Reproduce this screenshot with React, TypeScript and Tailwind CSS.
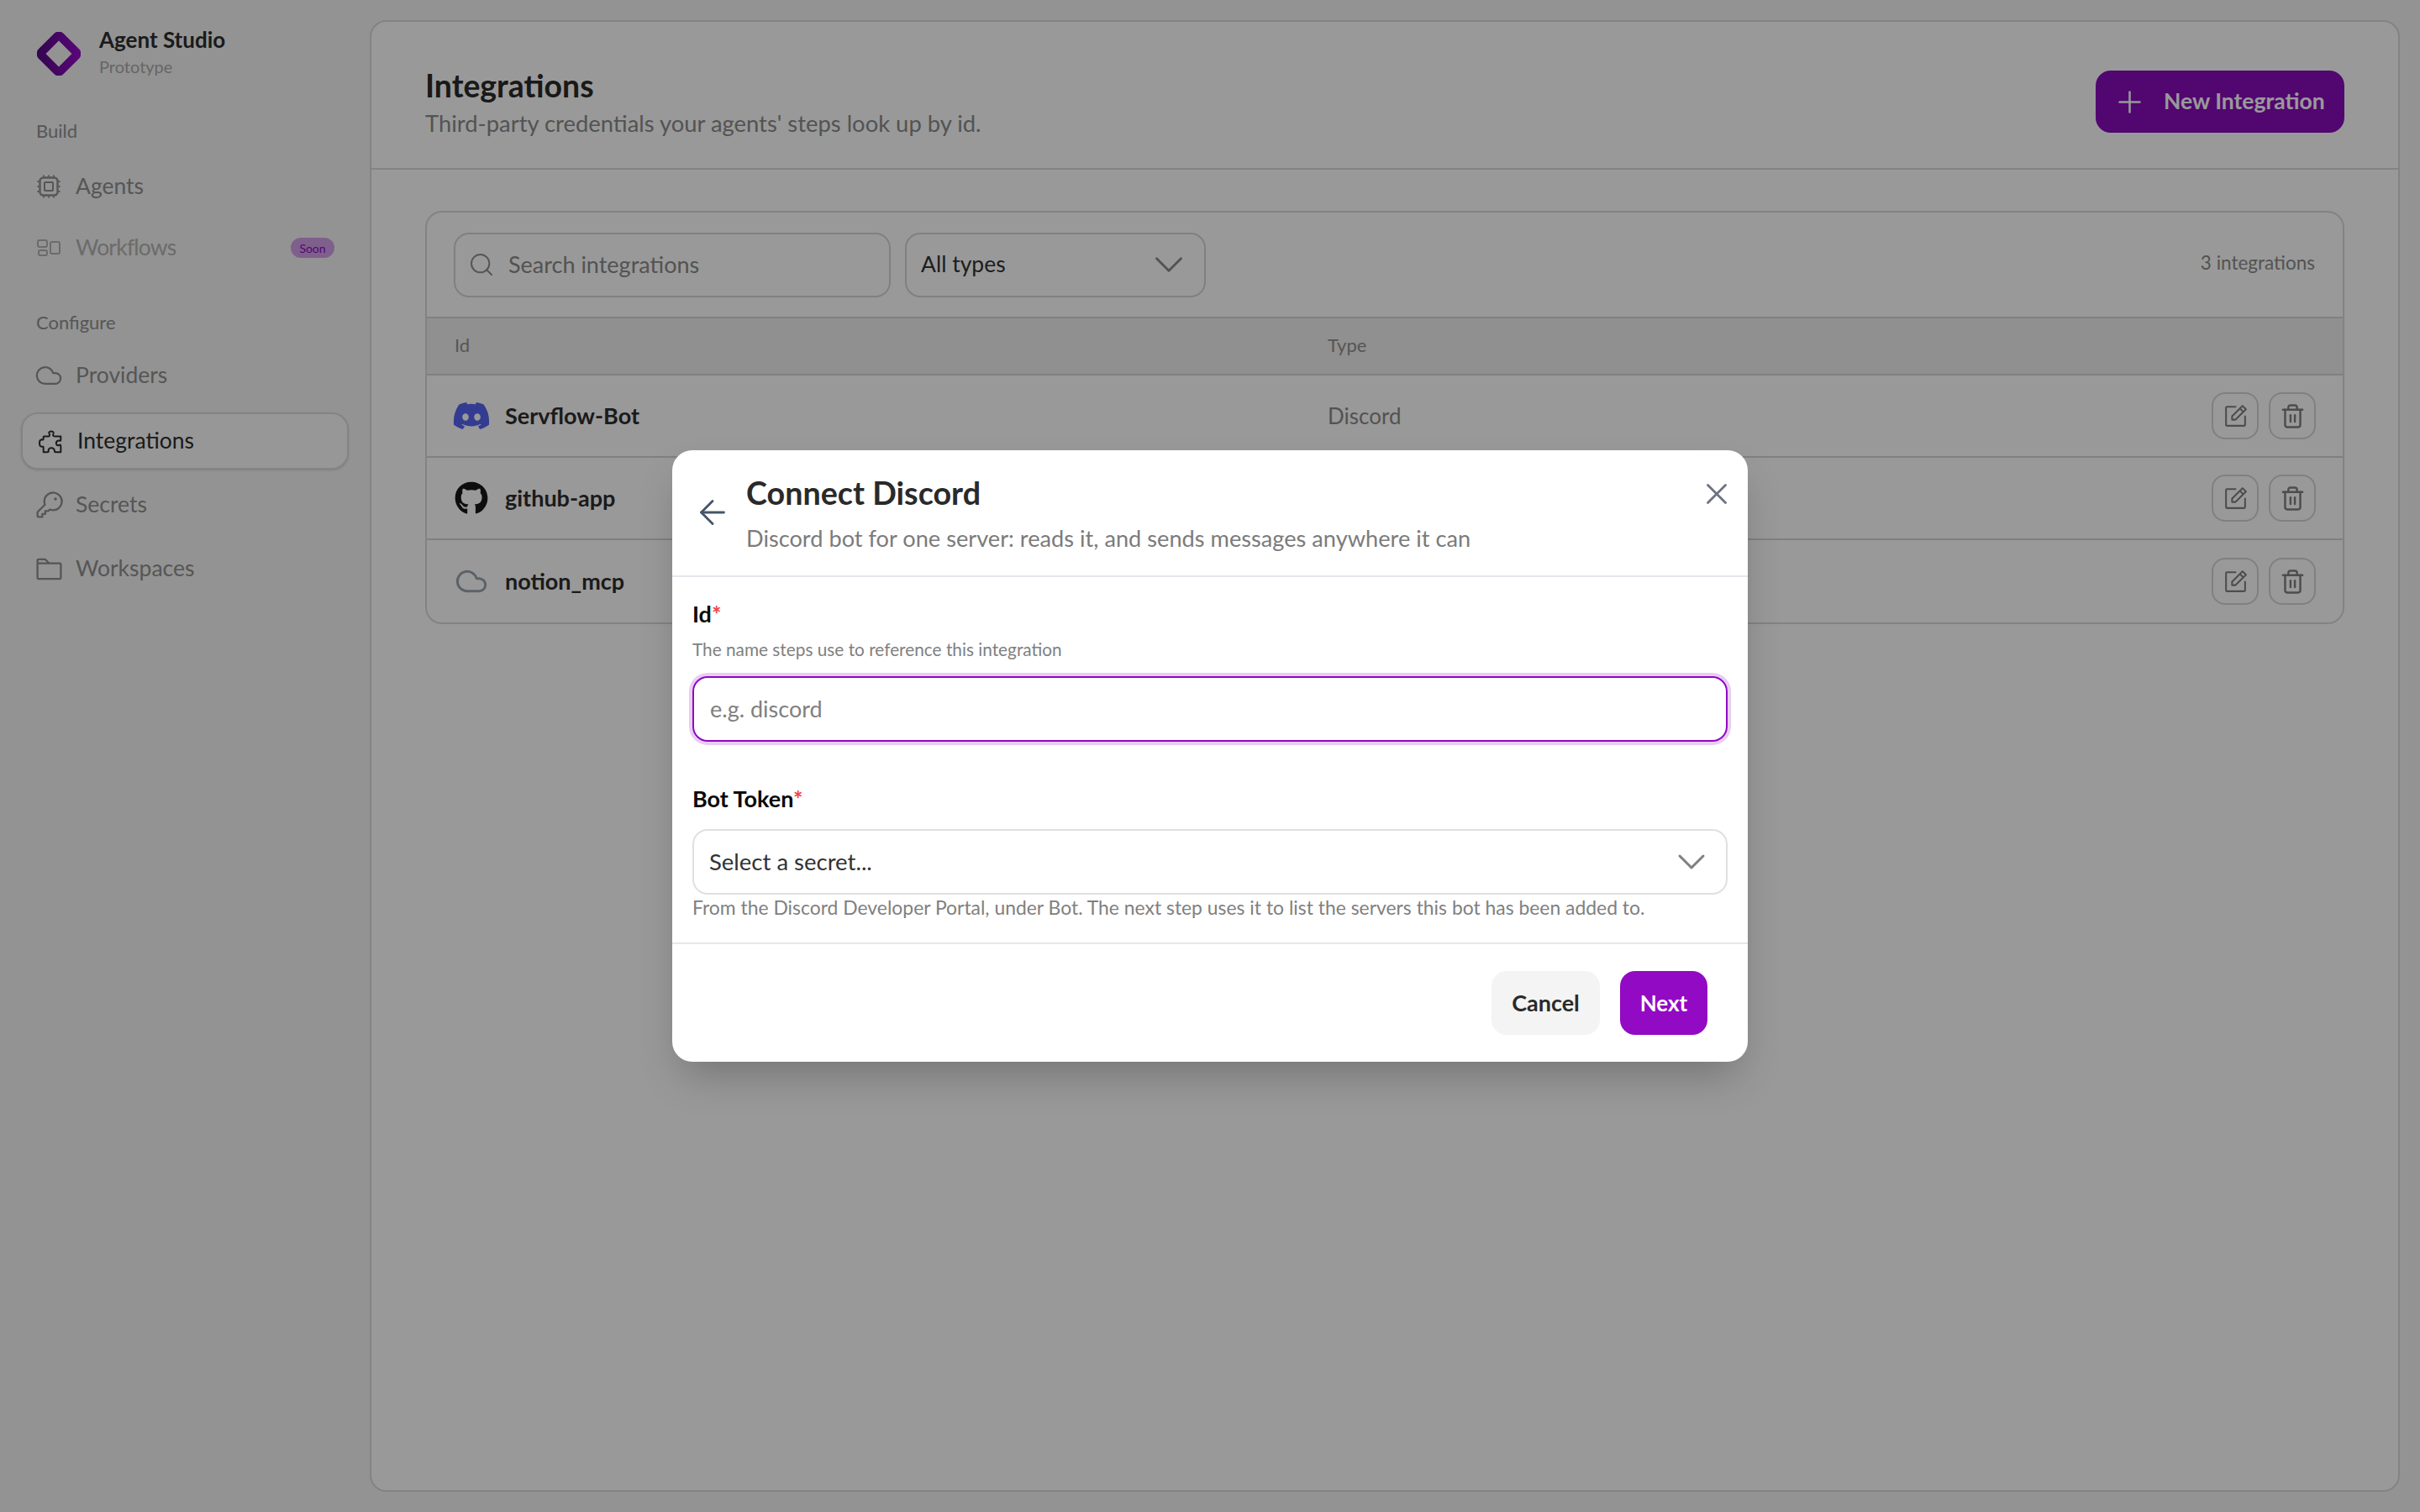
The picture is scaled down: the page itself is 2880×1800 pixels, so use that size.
import { ArrowLeft, ChevronDown, Cloud, Plus, Search, Trash2, X } from 'lucide-react'
import { FaDiscord, FaGithub } from 'react-icons/fa'
import { PiFolder, PiKey, PiNotePencil } from 'react-icons/pi'
import type { ReactNode } from 'react'

function Logo() {
  return (
    <svg width="52" height="52" viewBox="0 0 52 52" className="shrink-0">
      <defs>
        <linearGradient id="logo-grad" x1="0" y1="1" x2="1" y2="0">
          <stop offset="0" stopColor="#5a0a88" />
          <stop offset="1" stopColor="#930ac8" />
        </linearGradient>
      </defs>
      <rect
        x="10"
        y="10"
        width="32"
        height="32"
        rx="3"
        fill="none"
        stroke="url(#logo-grad)"
        strokeWidth="10"
        transform="rotate(45 26 26)"
      />
    </svg>
  )
}

function CpuIcon() {
  return (
    <svg width="28" height="28" viewBox="0 0 28 28" fill="none" stroke="currentColor" className="shrink-0">
      <rect x="3.5" y="3.5" width="21" height="21" rx="4" strokeWidth="2.4" />
      <rect x="9" y="9" width="10" height="10" rx="1" strokeWidth="2" />
      <path d="M8 0.5v2M14 0.5v2M20 0.5v2M8 25.5v2M14 25.5v2M20 25.5v2M0.5 8h2M0.5 14h2M0.5 20h2M25.5 8h2M25.5 14h2M25.5 20h2" strokeWidth="1.8" />
    </svg>
  )
}

function LayoutIcon() {
  return (
    <svg width="28" height="20" viewBox="0 0 28 20" fill="none" stroke="currentColor" strokeWidth="2" className="shrink-0">
      <rect x="1" y="1" width="11" height="8" rx="2" />
      <rect x="2" y="13" width="10" height="6" rx="2" />
      <rect x="16" y="3" width="11" height="14" rx="2" />
    </svg>
  )
}

function PuzzleIcon() {
  return (
    <svg width="30" height="31" viewBox="24 22 90 92" fill="none" stroke="currentColor" strokeWidth="6" strokeLinejoin="round" className="shrink-0">
      <path d="M46 50 H62 C68 50 66 42 64 38 C62 30 82 30 80 38 C78 44 76 50 84 50 H106 V62 C106 70 98 62 94 66 C86 72 90 84 98 82 C102 80 106 78 106 86 V106 H86 C82 106 86 98 80 94 C74 88 62 92 62 100 C62 104 64 106 58 106 H44 V90 C44 84 38 88 36 86 C28 84 28 64 36 62 C40 60 44 66 44 58 V52 Z" />
    </svg>
  )
}

function NavItem({ icon, label, className, badge }: { icon: ReactNode; label: string; className: string; badge?: string }) {
  return (
    <div className={`mx-[25px] flex h-[68px] w-[390px] items-center gap-[18px] px-[19px] text-[26.5px] ${className}`}>
      <span className="flex w-[28px] shrink-0 items-center justify-center">{icon}</span>
      <span>{label}</span>
      {badge && (
        <span className="mr-[-2px] ml-auto flex h-[24px] w-[52px] items-center justify-center rounded-full bg-[#d49ee9] text-[14px] tracking-normal text-[#8a0bc4]">
          {badge}
        </span>
      )}
    </div>
  )
}

function SectionLabel({ children, className }: { children: string; className: string }) {
  return <div className={`pl-[43px] text-[22px] leading-[30px] text-[#8f8f8f] ${className}`}>{children}</div>
}

function Sidebar() {
  return (
    <aside className="flex w-[440px] shrink-0 flex-col">
      <div className="flex items-center gap-[22px] pt-[32px] pl-[44px]">
        <Logo />
        <div>
          <div className="text-[26px] leading-[30px] font-bold text-[#2e2e2e]">Agent Studio</div>
          <div className="text-[20px] leading-[34px] text-[#ababab]">Prototype</div>
        </div>
      </div>
      <SectionLabel className="mt-[45px]">Build</SectionLabel>
      <NavItem className="mt-[17px] text-[#8f8f8f]" icon={<CpuIcon />} label="Agents" />
      <NavItem className="mt-[5px] tracking-[-0.8px] text-[#b3b3b3]" icon={<LayoutIcon />} label="Workflows" badge="Soon" />
      <SectionLabel className="mt-[40px]">Configure</SectionLabel>
      <NavItem className="mt-[14px] text-[#8f8f8f]" icon={<Cloud className="size-[34px] shrink-0" strokeWidth={1.6} />} label="Providers" />
      <NavItem
        className="mt-[10px] rounded-[20px] border-2 border-[#dcdcdc] bg-[#fcfcfc] text-[#2e2e2e] shadow-sm"
        icon={<PuzzleIcon />}
        label="Integrations"
      />
      <NavItem className="mt-[8px] text-[#8f8f8f]" icon={<PiKey className="size-[37px] shrink-0" />} label="Secrets" />
      <NavItem className="mt-[8px] text-[#8f8f8f]" icon={<PiFolder className="size-[37px] shrink-0" />} label="Workspaces" />
    </aside>
  )
}

const rows = [
  { id: 'Servflow-Bot', type: 'Discord', icon: <FaDiscord className="size-[46px] shrink-0 text-[#5865f2]" /> },
  { id: 'github-app', type: 'GitHub', icon: <FaGithub className="size-[40px] shrink-0 text-[#181717]" /> },
  { id: 'notion_mcp', type: 'MCP', icon: <Cloud className="size-[40px] shrink-0 text-[#9ca3af]" strokeWidth={1.8} /> },
]

function IntegrationsPage() {
  return (
    <main className="my-[24px] mr-[24px] flex flex-1 flex-col rounded-[20px] border-2 border-[#dadada] bg-white">
      <header className="flex h-[176px] shrink-0 items-start justify-between border-b-2 border-[#dadada] px-[64px] pt-[52px]">
        <div>
          <h1 className="text-[37.4px] leading-[48px] font-bold text-[#2a2a2a]">Integrations</h1>
          <p className="mt-[3px] text-[27.4px] leading-[36px] text-[#8a8a8a]">
            Third-party credentials your agents' steps look up by id.
          </p>
        </div>
        <button className="mt-[6px] flex h-[74px] w-[296px] items-center gap-[20px] rounded-[18px] bg-[#880abb] pl-[20px] text-[26.5px] font-bold text-white">
          <Plus className="size-[41px]" strokeWidth={1.5} />
          New Integration
        </button>
      </header>
      <div className="px-[64px] pt-[49px]">
        <div className="rounded-[20px] border-2 border-[#dadada]">
          <div className="flex h-[126px] items-center border-b-2 border-[#d6d6d6] pr-[33px] pl-[32px]">
            <div className="flex h-[77px] w-[520px] items-center gap-[16px] rounded-[18px] border-2 border-[#d6d6d6] pl-[15px]">
              <Search className="size-[32px] text-[#8f8f8f]" strokeWidth={1.5} />
              <span className="text-[27px] text-[#8a8a8a]">Search integrations</span>
            </div>
            <div className="ml-[17px] flex h-[77px] w-[358px] items-center justify-between rounded-[18px] border-2 border-[#d6d6d6] pr-[13px] pl-[17px]">
              <span className="text-[26.5px] text-[#333333]">All types</span>
              <ChevronDown className="size-[58px] text-[#8a8a8a]" strokeWidth={1.2} />
            </div>
            <span className="mb-[4px] ml-auto text-[22.5px] text-[#8a8a8a]">3 integrations</span>
          </div>
          <div className="flex h-[68px] items-center border-b-2 border-[#d6d6d6] bg-[#f1f1f1] px-[33px] pb-[3px] text-[22px] text-[#8f8f8f]">
            <span className="w-[1039px]">Id</span>
            <span>Type</span>
          </div>
          {rows.map((row, i) => (
            <div
              key={row.id}
              className={`flex h-[98px] items-center pr-[32px] pl-[33px] ${i < rows.length - 1 ? 'border-b-2 border-[#d6d6d6]' : ''}`}
            >
              <div className="flex w-[1039px] items-center gap-[20px]">
                <span className="flex w-[40px] items-center justify-center">{row.icon}</span>
                <span className="text-[27px] font-bold text-[#2e2e2e]">{row.id}</span>
              </div>
              <span className="text-[26px] text-[#8a8a8a]">{row.type}</span>
              <div className="ml-auto flex gap-[12px]">
                <button className="flex size-[56px] items-center justify-center rounded-[16px] border-2 border-[#d6d6d6] text-[#808080]">
                  <PiNotePencil className="size-[33px]" />
                </button>
                <button className="flex size-[56px] items-center justify-center rounded-[16px] border-2 border-[#d6d6d6] text-[#808080]">
                  <Trash2 className="size-[31px]" strokeWidth={1.9} />
                </button>
              </div>
            </div>
          ))}
        </div>
      </div>
    </main>
  )
}

function FieldLabel({ children }: { children: string }) {
  return (
    <div className="text-[27px] leading-[32px] font-bold text-[#0a0a0a]">
      {children}
      <span className="text-[#ef4444]">*</span>
    </div>
  )
}

function ConnectModal() {
  return (
    <div className="absolute inset-0 flex items-center justify-center bg-black/40">
      <div className="w-[1280px] overflow-hidden rounded-[24px] bg-white shadow-2xl">
        <div className="relative flex h-[151px] gap-[17px] border-b-2 border-[#e5e7eb] pt-[29px] pl-[25px]">
          <ArrowLeft className="mt-[22px] size-[46px] text-[#475569]" strokeWidth={1.5} />
          <div>
            <h2 className="text-[37.7px] leading-[44px] font-bold text-[#2a2a2a]">Connect Discord</h2>
            <p className="mt-[14px] text-[27.2px] leading-[36px] text-[#7b7b7b]">
              Discord bot for one server: reads it, and sends messages anywhere it can
            </p>
          </div>
          <X className="absolute top-[31px] right-[16px] size-[42px] text-[#6b7280]" strokeWidth={1.6} />
        </div>
        <div className="h-[435px] px-[24px] pt-[28px]">
          <FieldLabel>Id</FieldLabel>
          <div className="mt-[12px] text-[20.8px] leading-[28px] text-[#808080]">
            The name steps use to reference this integration
          </div>
          <div className="mt-[18px] flex h-[78px] items-center rounded-[18px] border-2 border-[#8f07c2] pl-[19px] text-[27px] text-[#808080] ring-4 ring-[#8f07c2]/20">
            e.g. discord
          </div>
          <div className="mt-[52px]">
            <FieldLabel>Bot Token</FieldLabel>
          </div>
          <div className="mt-[20px] flex h-[78px] items-center justify-between rounded-[18px] border-2 border-[#e0e0e0] pr-[13px] pl-[18px] text-[27.5px] text-[#333333]">
            Select a secret...
            <ChevronDown className="size-[56px] text-[#808080]" strokeWidth={1.3} />
          </div>
          <div className="text-[22.9px] leading-[30px] text-[#808080]">
            From the Discord Developer Portal, under Bot. The next step uses it to list the servers this bot has been added to.
          </div>
        </div>
        <div className="flex h-[142px] items-center justify-end gap-[24px] border-t-2 border-[#e5e7eb] pr-[48px]">
          <button className="flex h-[76px] w-[129px] items-center justify-center rounded-[18px] bg-[#f4f4f4] text-[27px] font-bold text-[#2a2a2a]">
            Cancel
          </button>
          <button className="flex h-[76px] w-[104px] items-center justify-center rounded-[18px] bg-[#930ac4] text-[26px] font-bold text-white">
            Next
          </button>
        </div>
      </div>
    </div>
  )
}

export default function App() {
  return (
    <div className="relative flex h-screen bg-[#f5f5f5] font-[family-name:Lato,sans-serif]">
      <Sidebar />
      <IntegrationsPage />
      <ConnectModal />
    </div>
  )
}
